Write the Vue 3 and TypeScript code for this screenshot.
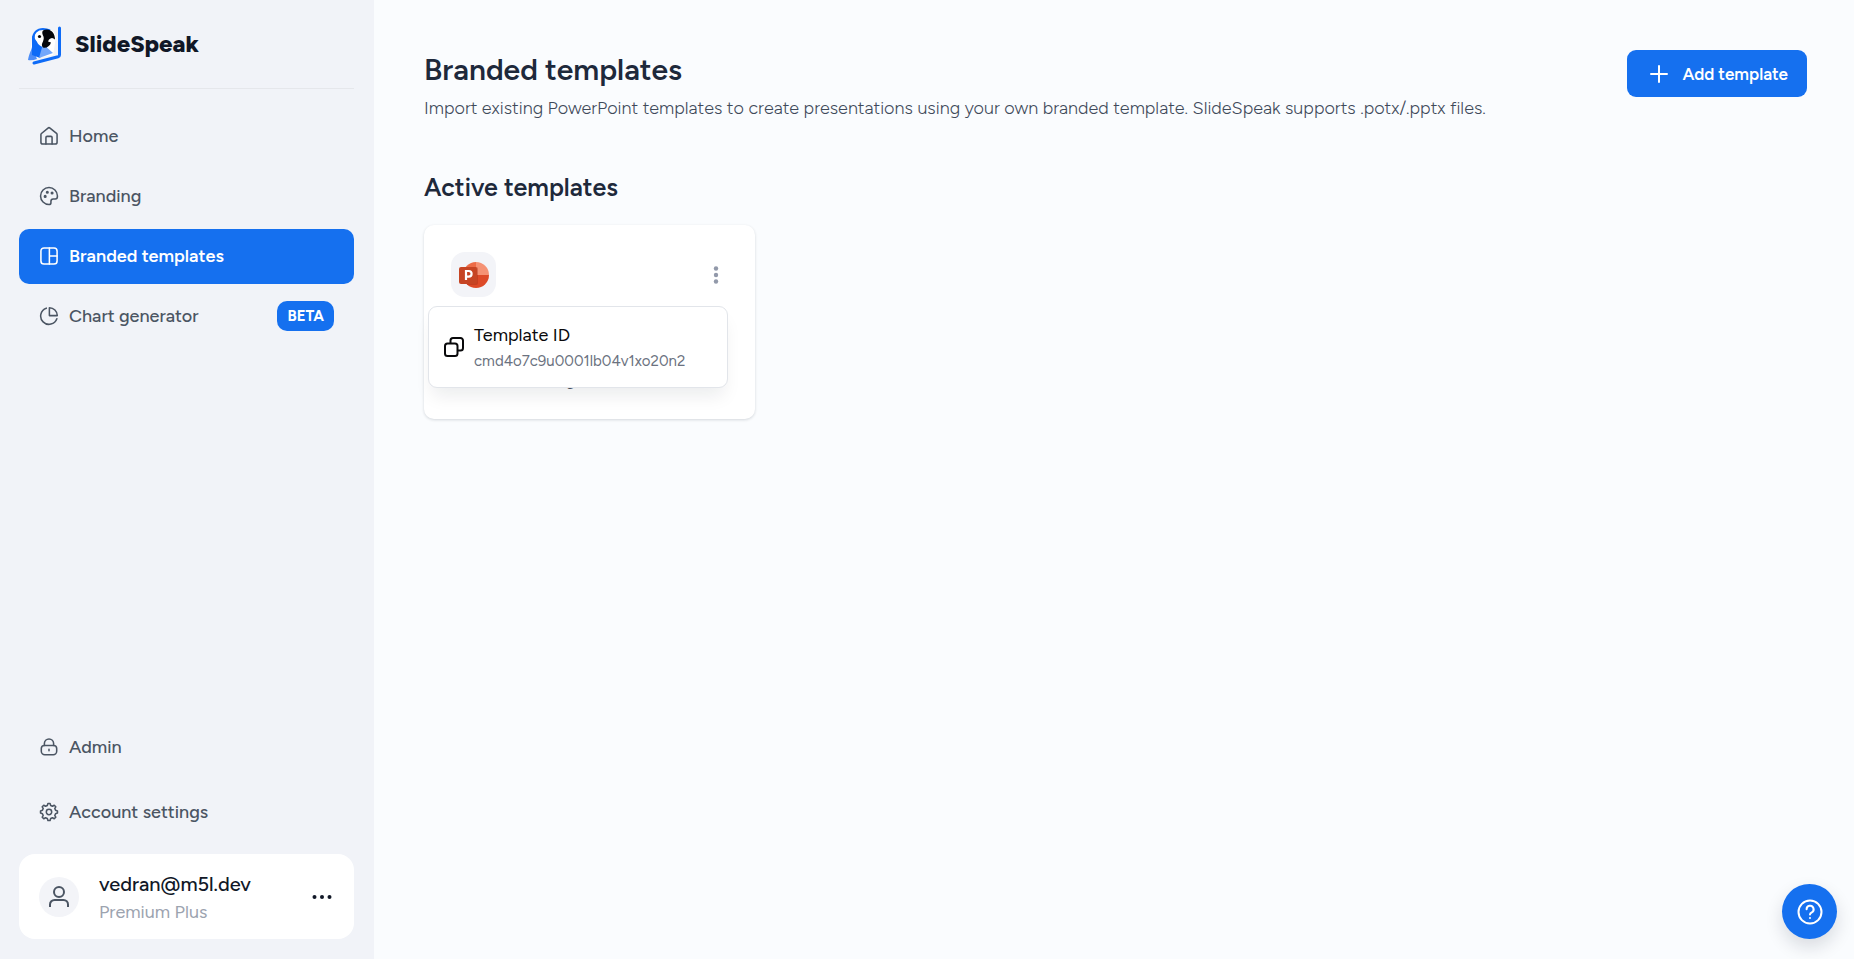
<script setup lang="ts">
type NavIcon = 'home' | 'palette' | 'layout' | 'chart' | 'lock' | 'gear'

interface NavItem {
  label: string
  icon: NavIcon
  active?: boolean
  badge?: string
}

const primaryItems: NavItem[] = [
  { label: 'Home', icon: 'home' },
  { label: 'Branding', icon: 'palette' },
  { label: 'Branded templates', icon: 'layout', active: true },
  { label: 'Chart generator', icon: 'chart', badge: 'BETA' },
]

const secondaryItems: NavItem[] = [
  { label: 'Admin', icon: 'lock' },
  { label: 'Account settings', icon: 'gear' },
]

const icons: Record<NavIcon, string[]> = {
  home: [
    'M1.500 10.200a2 2 0 0 1 .7-1.500l8.500-7a2 2 0 0 1 2.600 0l8.500 7a2 2 0 0 1 .7 1.500V20a2.500 2.500 0 0 1-2.500 2.500H4A2.500 2.500 0 0 1 1.500 20z',
    'M8 22.500V14a1.500 1.500 0 0 1 1.500-1.500h5A1.500 1.500 0 0 1 16 14v8.500',
  ],
  palette: [
    'M23 12C23 6 18 1 12 1S1 6 1 12s5 11 11 11c1.600 0 2.500-.8 2.500-2v-2a3 3 0 0 1 3-3h2.700c1.800 0 2.800-1.600 2.800-4z',
    'M7 12.500h.01M9.800 7.200h.01M16 8h.01',
  ],
  layout: [
    'M5.500 1.500h13a4 4 0 0 1 4 4v13a4 4 0 0 1-4 4h-13a4 4 0 0 1-4-4v-13a4 4 0 0 1 4-4z',
    'M12.500 1.500v21M12.500 12h10',
  ],
  chart: [
    'M8.500 1.800a10.800 10.800 0 1 0 13.700 13.700',
    'M12.500 1.200a10.600 10.600 0 0 1 10.300 10.300H12.500z',
  ],
  lock: [
    'M6 10h12a4 4 0 0 1 4 4v3.500a4.500 4.500 0 0 1-4.500 4.500h-11A4.500 4.500 0 0 1 2 17.500V14a4 4 0 0 1 4-4z',
    'M6 10V7.500a6 6 0 0 1 12 0V10M12 15v2',
  ],
  gear: [
    'M9.800 3.500 10.600 1h2.800l.8 2.500 2.300 1 2.300-1.300 2 2-1.300 2.300 1 2.300 2.500.8v2.800l-2.500.8-1 2.300 1.300 2.300-2 2-2.300-1.300-2.300 1-.8 2.500h-2.800l-.8-2.500-2.300-1-2.300 1.300-2-2 1.300-2.300-1-2.300L1 13.400v-2.800l2.500-.8 1-2.300-1.300-2.300 2-2 2.300 1.300z',
    'M12 8.500a3.500 3.500 0 1 0 0 7 3.500 3.500 0 0 0 0-7z',
  ],
}

const templateId = 'cmd4o7c9u0001lb04v1xo20n2'
</script>

<template>
  <div class="app">
    <aside class="sidebar">
      <a class="brand" href="#">
        <svg class="brand-mark" viewBox="0 0 34 40" aria-hidden="true">
          <path d="M4 14C4 7 9 3 15 3c7 0 12 3 13 9l-3 18L1 34z" fill="#fff" />
          <path d="M5 22V14C5 8 9 4 15 4c3 0 5 .5 7 1.500" fill="none" stroke="#0e6bf7" stroke-width="2" />
          <path d="M4 13v12l10 6 5-9c-4-1-7-2-9-5-3-2-4-4-3-8-2 1-3 2-3 4z" fill="#0e6bf7" />
          <path d="M4 22C3 26 1 29 0 35c3 .6 6 0 9-1z" fill="#4c8df8" />
          <path d="M4 21 4 30l8 3 4-9z" fill="#0e6bf7" />
          <path d="M8 13c0-4 3-7 7-7v16c-4-1-7-5-7-9z" fill="#fff" />
          <path d="M15 19 11 33l14-5z" fill="#73a7fb" />
          <path d="M15 5.500c5-3 12 0 12 9-2-2-4-2-6 0l-1 2 3 1c-1 4-5 6-8 5-2-2-1-4 0-6 1-3 1-4 0-6-1-2-1-4 0-5z" fill="#05070b" />
          <circle cx="11.500" cy="11.500" r="1.600" fill="#05070b" />
          <path d="M31.500 3v27c0 1-.5 1.500-1.500 1.800L6 38" fill="none" stroke="#0e6bf7" stroke-width="3" stroke-linecap="round" />
        </svg>
        <span>SlideSpeak</span>
      </a>

      <nav class="nav" aria-label="Main">
        <a
          v-for="item in primaryItems"
          :key="item.label"
          class="nav-item"
          :class="{ active: item.active }"
          :aria-current="item.active ? 'page' : undefined"
          href="#"
        >
          <svg class="icon" viewBox="-1 -1 26 26" aria-hidden="true">
            <path v-for="d in icons[item.icon]" :key="d" :d="d" :class="{ dots: d.includes('h.01') }" />
          </svg>
          <span>{{ item.label }}</span>
          <span v-if="item.badge" class="badge">{{ item.badge }}</span>
        </a>
      </nav>

      <nav class="nav nav-bottom" aria-label="Account">
        <a v-for="item in secondaryItems" :key="item.label" class="nav-item" href="#">
          <svg class="icon" viewBox="-1 -1 26 26" aria-hidden="true">
            <path v-for="d in icons[item.icon]" :key="d" :d="d" />
          </svg>
          <span>{{ item.label }}</span>
        </a>
      </nav>

      <div class="user">
        <span class="avatar">
          <svg viewBox="0 0 24 24" aria-hidden="true">
            <circle cx="12" cy="7" r="5" />
            <path d="M3 22v-2.500a4.500 4.500 0 0 1 4.500-4.500h9a4.500 4.500 0 0 1 4.500 4.500V22" />
          </svg>
        </span>
        <div class="user-text">
          <span class="user-mail">vedran@m5l.dev</span>
          <span class="user-plan">Premium Plus</span>
        </div>
        <button class="user-more" type="button" aria-label="Account menu">
          <svg viewBox="0 0 20 6" aria-hidden="true">
            <circle cx="2.500" cy="3" r="2" />
            <circle cx="10" cy="3" r="2" />
            <circle cx="17.500" cy="3" r="2" />
          </svg>
        </button>
      </div>
    </aside>

    <main class="main">
      <header class="head">
        <div>
          <h1>Branded templates</h1>
          <p>
            Import existing PowerPoint templates to create presentations using your own branded template.
            SlideSpeak supports .potx/.pptx files.
          </p>
        </div>
        <button class="add" type="button">
          <svg viewBox="0 0 18 18" aria-hidden="true"><path d="M9 1v16M1 9h16" /></svg>
          <span>Add template</span>
        </button>
      </header>

      <h2>Active templates</h2>

      <div class="cards">
        <article class="card">
          <div class="card-top">
            <span class="file-icon">
              <svg viewBox="0 0 30 28" aria-hidden="true">
                <path d="M17 1a13 13 0 0 0-13 13l13 0z" fill="#ed6c47" />
                <path d="M17 1a13 13 0 0 1 13 13l-6 2-7-2z" fill="#f59274" />
                <path d="M4 14a13 13 0 0 0 26 0z" fill="#dd4a28" />
                <path d="M5 6h12a2 2 0 0 1 2 2v14a2 2 0 0 1-2 2H8z" fill="#a72e14" opacity=".4" />
                <rect x="0" y="6" width="18" height="17" rx="2" fill="#c64524" />
                <path d="M7 19V10h2.800a2.700 2.700 0 0 1 0 5.600H7" fill="none" stroke="#fff" stroke-width="2.200" />
              </svg>
            </span>
            <button class="card-more" type="button" aria-label="Template options">
              <svg viewBox="0 0 6 18" aria-hidden="true">
                <circle cx="3" cy="2.500" r="2.200" />
                <circle cx="3" cy="9" r="2.200" />
                <circle cx="3" cy="15.500" r="2.200" />
              </svg>
            </button>
          </div>
          <span class="card-meta">Created 2 weeks ago</span>

          <button class="menu" type="button">
            <svg viewBox="0 0 20 20" aria-hidden="true">
              <rect x="1" y="6.500" width="12.500" height="12.500" rx="2.500" />
              <path d="M6.500 6.500V3.500A2.500 2.500 0 0 1 9 1h7.500A2.500 2.500 0 0 1 19 3.500V11a2.500 2.500 0 0 1-2.500 2.500h-3" />
            </svg>
            <span class="menu-text">
              <span class="menu-title">Template ID</span>
              <span class="menu-id">{{ templateId }}</span>
            </span>
          </button>
        </article>
      </div>
    </main>

    <button class="help" type="button" aria-label="Help">
      <svg viewBox="0 0 26 26" aria-hidden="true">
        <circle cx="13" cy="13" r="11.500" />
        <path d="M9.600 10.300a3.500 3.500 0 1 1 5.200 3c-1.200.6-1.800 1.100-1.800 2.200" />
        <path d="M13 18.900h.01" />
      </svg>
    </button>
  </div>
</template>

<style>
body {
  background: #fafcfe;
}
</style>

<style scoped>
.app {
  display: flex;
  min-height: 100vh;
  box-sizing: border-box;
  font-family: Figtree, Lato, "Liberation Sans", sans-serif;
  font-size: 18px;
  line-height: 24px;
  color: #1e293b;
}

.app * {
  box-sizing: border-box;
}

button {
  font: inherit;
  border: 0;
  padding: 0;
  cursor: pointer;
}

a {
  color: inherit;
  text-decoration: none;
}

svg {
  display: block;
  flex: none;
}

.sidebar {
  flex: none;
  width: 374px;
  display: flex;
  flex-direction: column;
  padding: 0 20px 20px 19px;
  background: #f1f3f8;
}

.brand {
  display: flex;
  align-items: center;
  gap: 13px;
  height: 89px;
  padding-left: 9px;
  border-bottom: 1px solid #e5e7eb;
  color: #111827;
  font-size: 24px;
  font-weight: 800;
}

.brand-mark {
  width: 34px;
  height: 40px;
  margin-top: 2px;
}

.nav {
  display: flex;
  flex-direction: column;
  gap: 5px;
  padding-top: 20px;
}

.nav-bottom {
  gap: 10px;
  margin-top: auto;
  padding: 0 0 14px;
}

.nav-item {
  display: flex;
  align-items: center;
  gap: 10px;
  height: 55px;
  padding: 0 20px 2px;
  border-radius: 10px;
  color: #4b5563;
  font-weight: 500;
}

.nav-item.active {
  background: #1570ef;
  color: #fff;
  font-weight: 600;
}

.icon {
  width: 20px;
  height: 20px;
  fill: none;
  stroke: currentColor;
  stroke-width: 2;
  stroke-linecap: round;
  stroke-linejoin: round;
}

.icon .dots {
  stroke-width: 4;
}

.badge {
  margin-left: auto;
  padding: 3px 10px;
  border-radius: 10px;
  background: #1570ef;
  color: #fff;
  font-size: 15px;
  font-weight: 700;
}

.user {
  display: flex;
  align-items: center;
  gap: 20px;
  height: 85px;
  padding: 0 20px;
  border-radius: 16px;
  background: #fff;
}

.avatar {
  display: grid;
  place-items: center;
  width: 40px;
  height: 40px;
  border-radius: 50%;
  background: #f3f4f8;
}

.avatar svg {
  width: 24px;
  height: 24px;
  fill: none;
  stroke: #4b5563;
  stroke-width: 2;
}

.user-text {
  display: flex;
  flex-direction: column;
  gap: 4px;
  flex: 1;
  padding-top: 2px;
}

.user-mail {
  color: #111827;
  font-size: 20px;
  font-weight: 500;
}

.user-plan {
  color: #9ca3af;
}

.user-more {
  background: none;
  padding: 8px 2px;
}

.user-more svg {
  width: 20px;
  height: 6px;
  fill: #111827;
}

.main {
  flex: 1;
  min-width: 0;
  padding: 50px 47px 50px 50px;
}

.head {
  display: flex;
  justify-content: space-between;
  align-items: flex-start;
  gap: 24px;
}

h1,
h2,
p {
  margin: 0;
}

h1 {
  font-size: 30px;
  font-weight: 600;
  line-height: 40px;
}

.head p {
  padding-top: 6px;
  color: #3f4a5a;
  font-weight: 300;
}

h2 {
  padding: 52px 0 22px;
  font-size: 25px;
  font-weight: 600;
  line-height: 31px;
}

.add {
  display: flex;
  align-items: center;
  flex: none;
  gap: 14px;
  height: 47px;
  padding: 0 19px 0 23px;
  border-radius: 9px;
  background: #1570ef;
  color: #fff;
  font-size: 17px;
  font-weight: 600;
}

.add svg {
  width: 18px;
  height: 18px;
  fill: none;
  stroke: currentColor;
  stroke-width: 2;
  stroke-linecap: round;
}

.cards {
  display: grid;
  grid-template-columns: repeat(4, 1fr);
  gap: 20px;
}

.card {
  position: relative;
  display: flex;
  flex-direction: column;
  height: 194px;
  padding: 27px 27px 25px;
  border-radius: 10px;
  background: #fff;
  box-shadow: 0 1px 3px rgb(15 23 42 / 16%);
}

.card-top {
  display: flex;
  justify-content: space-between;
  align-items: center;
}

.file-icon {
  display: grid;
  place-items: center;
  width: 45px;
  height: 45px;
  border-radius: 14px;
  background: #f3f4f8;
}

.file-icon svg {
  width: 30px;
  height: 28px;
}

.card-more {
  background: none;
  padding: 4px 9px;
}

.card-more svg {
  width: 6px;
  height: 18px;
  fill: #9299aa;
}

.card-meta {
  margin-top: auto;
  color: #4b5563;
  font-size: 14px;
}

.menu {
  position: absolute;
  top: 81px;
  left: 4px;
  right: 27px;
  display: flex;
  align-items: center;
  gap: 10px;
  height: 82px;
  padding: 0 15px;
  border: 1px solid #e2e5ea;
  border-radius: 9px;
  background: #fff;
  color: #09090b;
  text-align: left;
  box-shadow: 0 12px 18px -4px rgb(15 23 42 / 8%);
}

.menu svg {
  width: 20px;
  height: 20px;
  fill: none;
  stroke: currentColor;
  stroke-width: 2;
  stroke-linejoin: round;
}

.menu-text {
  display: flex;
  flex-direction: column;
  gap: 2px;
  padding-top: 2px;
}

.menu-title {
  font-size: 18px;
}

.menu-id {
  color: #6b7280;
  font-size: 15px;
}

.help {
  position: fixed;
  right: 17px;
  bottom: 20px;
  display: grid;
  place-items: center;
  width: 55px;
  height: 55px;
  border-radius: 50%;
  background: #1570ef;
  box-shadow: 0 8px 18px rgb(15 23 42 / 14%);
}

.help svg {
  width: 26px;
  height: 26px;
  fill: none;
  stroke: #fff;
  stroke-width: 2;
  stroke-linecap: round;
}
</style>
